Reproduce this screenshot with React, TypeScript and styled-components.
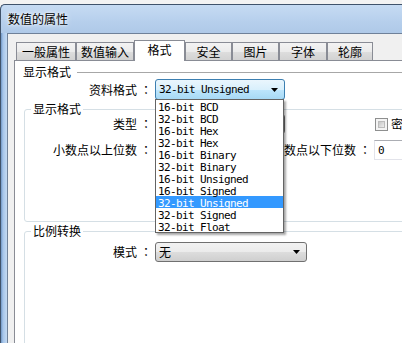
import styled, { createGlobalStyle } from 'styled-components'

const GlobalStyle = createGlobalStyle`
  html, body {
    margin: 0;
    padding: 0;
    overflow: hidden;
    background: #f3f3f3;
  }
  body {
    font-family: "Noto Sans CJK SC", sans-serif;
    font-size: 12px;
    color: #000;
  }
`

const formats = [
  '16-bit BCD',
  '32-bit BCD',
  '16-bit Hex',
  '32-bit Hex',
  '16-bit Binary',
  '32-bit Binary',
  '16-bit Unsigned',
  '16-bit Signed',
  '32-bit Unsigned',
  '32-bit Signed',
  '32-bit Float',
]

const tabs = [
  { label: '一般属性', width: 60 },
  { label: '数值输入', width: 58 },
  { label: '格式', width: 51, active: true },
  { label: '安全', width: 47 },
  { label: '图片', width: 47 },
  { label: '字体', width: 48 },
  { label: '轮廓', width: 46 },
]

const Window = styled.div`
  margin-top: 4px;
  width: 480px;
  height: 339px;
  display: flex;
  flex-direction: column;
  border-top: 1px solid #40536b;
  border-left: 1px solid #40536b;
  border-top-left-radius: 5px;
  background: linear-gradient(to right, #7097c6 0px, #a6c5ea 2px, #c4daf2 6px);
`

const TitleBar = styled.div`
  height: 28px;
  display: flex;
  align-items: center;
  padding-left: 7px;
  border-top-left-radius: 5px;
  background: linear-gradient(to bottom, #c6dbf3 0%, #b6cfec 60%, #afc9e8 100%);
`

const Title = styled.span`
  font-size: 12px;
  line-height: 14px;
  text-shadow: 0 0 6px #fff, 0 0 3px #fff;
`

const Frame = styled.div`
  flex: 1;
  display: flex;
  padding-left: 6px;
  min-height: 0;
`

const Client = styled.div`
  flex: 1;
  display: flex;
  flex-direction: column;
  background: #f0f0f0;
  border-top: 1px solid #6f8199;
  border-left: 1px solid #6f8199;
  padding: 6px 0 0 6px;
  min-height: 0;
`

const TabStrip = styled.div`
  height: 20px;
  display: flex;
  align-items: flex-end;
  padding-left: 2px;
  position: relative;
  z-index: 1;
`

const Tab = styled.div<{ $width: number; $active?: boolean }>`
  box-sizing: border-box;
  width: ${({ $width }) => $width}px;
  height: ${({ $active }) => ($active ? 21 : 18)}px;
  margin-bottom: ${({ $active }) => ($active ? -1 : 0)}px;
  border: 1px solid #898c95;
  border-bottom: none;
  display: flex;
  justify-content: center;
  align-items: ${({ $active }) => ($active ? 'flex-start' : 'center')};
  padding-top: ${({ $active }) => ($active ? 2 : 1)}px;
  line-height: 14px;
  background: ${({ $active }) =>
    $active
      ? '#fff'
      : 'linear-gradient(to bottom, #f3f3f3 0%, #ebebeb 50%, #dedede 50%, #d2d2d2 100%)'};
`

const Pane = styled.div`
  flex: 1;
  display: flex;
  flex-direction: column;
  background: #fff;
  border: 1px solid #898c95;
  border-right: none;
  border-bottom: none;
`

const SectionHeader = styled.div`
  display: flex;
  align-items: center;
  gap: 6px;
  height: 14px;
  margin: 4px 0 0 8px;
  line-height: 14px;
`

const Rule = styled.div`
  flex: 1;
  height: 1px;
  background: #a7a7a7;
`

const FieldRow = styled.div`
  display: flex;
  align-items: center;
  height: 21px;
`

const Label = styled.div<{ $width: number }>`
  box-sizing: border-box;
  width: ${({ $width }) => $width}px;
  display: flex;
  justify-content: flex-end;
  line-height: 14px;
  white-space: nowrap;
`

const Colon = styled.span`
  flex: none;
  width: 18px;
  text-align: center;
  font-family: "Noto Sans CJK JP", sans-serif;
`

const Combo = styled.div<{ $width: number; $hot?: boolean }>`
  position: relative;
  box-sizing: border-box;
  width: ${({ $width }) => $width}px;
  height: ${({ $hot }) => ($hot ? 21 : 20)}px;
  display: flex;
  align-items: center;
  justify-content: space-between;
  padding: 0 6px 0 3px;
  border: 1px solid ${({ $hot }) => ($hot ? '#3c7fb1' : '#707070')};
  border-radius: 3px;
  background: ${({ $hot }) =>
    $hot
      ? 'linear-gradient(to bottom, #eaf6fd 0%, #d9f0fc 50%, #bee6fd 50%, #a7d9f5 100%)'
      : 'linear-gradient(to bottom, #f2f2f2 0%, #ebebeb 50%, #dddddd 50%, #cfcfcf 100%)'};
`

const MonoText = styled.span`
  font-family: "DejaVu Sans Mono", monospace;
  font-size: 11px;
  letter-spacing: -0.62px;
  white-space: pre;
`

const ComboText = styled.span`
  line-height: 14px;
`

const DropList = styled.div`
  position: absolute;
  top: 100%;
  left: -1px;
  width: 129px;
  box-sizing: border-box;
  z-index: 10;
  background: #fff;
  border: 1px solid #646464;
  box-shadow: 2px 2px 2px rgba(0, 0, 0, 0.35);
`

const DropItem = styled.div<{ $selected?: boolean }>`
  height: 12px;
  line-height: 12px;
  padding-left: 2px;
  color: ${({ $selected }) => ($selected ? '#fff' : '#000')};
  background: ${({ $selected }) => ($selected ? '#3399ff' : 'transparent')};
`

const Group = styled.fieldset<{ $height: number }>`
  box-sizing: border-box;
  height: ${({ $height }) => $height}px;
  margin: 2px 0 0 9px;
  padding: 0;
  min-width: 0;
  border: 1px solid #d5dfe5;
  border-radius: 3px;
`

const Legend = styled.legend`
  margin-left: 6px;
  padding: 0 2px;
  line-height: 14px;
  font-size: 12px;
`

const FieldGrid = styled.div`
  display: grid;
  grid-template-columns: 130px 130px 89px 1fr;
  grid-template-rows: 16px 20px;
  row-gap: 8px;
  align-items: center;
`

const TextBox = styled.div<{ $width: number }>`
  box-sizing: border-box;
  width: ${({ $width }) => $width}px;
  height: 20px;
  display: flex;
  align-items: center;
  padding-left: 3px;
  background: #fff;
  border: 1px solid #e2e3ea;
  border-top-color: #abadb3;
`

const CheckRow = styled.div`
  display: flex;
  align-items: center;
  gap: 3px;
  margin-left: 1px;
  line-height: 14px;
`

const CheckBox = styled.span`
  box-sizing: border-box;
  width: 13px;
  height: 13px;
  padding: 2px;
  border: 1px solid #8e8f8f;
  background: #f4f4f4;
  display: flex;

  &::after {
    content: '';
    flex: 1;
    background: linear-gradient(135deg, #c6c6c6, #eeeeee);
    border: 1px solid #bcbcbc;
  }
`

const ModeRow = styled.div`
  display: flex;
  align-items: center;
  margin-top: 4px;
`

function Arrow() {
  return (
    <svg width="7" height="4" viewBox="0 0 7 4">
      <polygon points="0,0 7,0 3.5,4" fill="#000" />
    </svg>
  )
}

function FieldLabel({ width, text }: { width: number; text: string }) {
  return (
    <Label $width={width}>
      <span>{text}</span>
      <Colon>：</Colon>
    </Label>
  )
}

export default function App() {
  return (
    <>
      <GlobalStyle />
      <Window>
        <TitleBar>
          <Title>数值的属性</Title>
        </TitleBar>
        <Frame>
          <Client>
            <TabStrip>
              {tabs.map((t) => (
                <Tab key={t.label} $width={t.width} $active={t.active}>
                  {t.label}
                </Tab>
              ))}
            </TabStrip>
            <Pane>
              <SectionHeader>
                <span>显示格式</span>
                <Rule />
              </SectionHeader>
              <FieldRow>
                <FieldLabel width={140} text="资料格式" />
                <Combo $width={130} $hot>
                  <MonoText>32-bit Unsigned</MonoText>
                  <Arrow />
                  <DropList>
                    {formats.map((f) => (
                      <DropItem key={f} $selected={f === '32-bit Unsigned'}>
                        <MonoText>{f}</MonoText>
                      </DropItem>
                    ))}
                  </DropList>
                </Combo>
              </FieldRow>

              <Group $height={120}>
                <Legend>显示格式</Legend>
                <FieldGrid>
                  <FieldLabel width={130} text="类型" />
                  <Combo $width={130}>
                    <ComboText />
                    <Arrow />
                  </Combo>
                  <span />
                  <CheckRow>
                    <CheckBox />
                    <span>密码</span>
                  </CheckRow>

                  <FieldLabel width={130} text="小数点以上位数" />
                  {/* sits under the open list */}
                  <TextBox $width={60} />
                  <FieldLabel width={89} text="小数点以下位数" />
                  <TextBox $width={60}>
                    <MonoText>0</MonoText>
                  </TextBox>
                </FieldGrid>
              </Group>

              <Group $height={200}>
                <Legend>比例转换</Legend>
                <ModeRow>
                  <FieldLabel width={130} text="模式" />
                  <Combo $width={152}>
                    <ComboText>无</ComboText>
                    <Arrow />
                  </Combo>
                </ModeRow>
              </Group>
            </Pane>
          </Client>
        </Frame>
      </Window>
    </>
  )
}
